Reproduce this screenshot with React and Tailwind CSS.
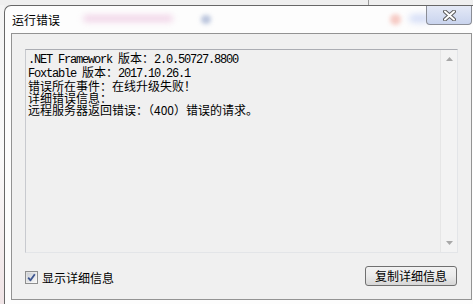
const SANS = "font-['Noto_Sans_CJK_SC','Noto_Sans',sans-serif]";

function CloseButton() {
  return (
    <div className="w-[46px] h-[19px] rounded-b-[4px] border border-t-0 border-[#8a8d96] bg-gradient-to-b from-[#e4e9f6] to-[#c9d4ee] flex items-center justify-center">
      <svg width="13" height="11" viewBox="0 0 13 11">
        <path d="M2 1.5 L11 9.5 M11 1.5 L2 9.5" stroke="#5a5a5a" strokeWidth="4" strokeLinecap="round" />
        <path d="M2 1.5 L11 9.5 M11 1.5 L2 9.5" stroke="#ffffff" strokeWidth="2" strokeLinecap="round" />
      </svg>
    </div>
  );
}

function Scrollbar() {
  return (
    <div className="w-[17px] h-full border-l border-[#e6e6e6] bg-[#f3f3f3] flex flex-col justify-between items-center py-[7px]">
      <svg width="7" height="4" viewBox="0 0 7 4"><path d="M0 4 L3.5 0 L7 4 Z" fill="#a8a8a8" /></svg>
      <svg width="7" height="4" viewBox="0 0 7 4"><path d="M0 0 L3.5 4 L7 0 Z" fill="#a8a8a8" /></svg>
    </div>
  );
}

function Checkbox() {
  return (
    <div className="w-[13px] h-[13px] border border-[#8e8f8f] bg-gradient-to-br from-[#dcdcdc] to-[#fbfbfb] p-[1px]">
      <div className="w-full h-full bg-gradient-to-br from-[#cbcfd5] to-[#f6f6f6] flex items-center justify-center">
        <svg width="9" height="9" viewBox="0 0 9 9">
          <path d="M1.2 4.6 L3.5 7.3 L7.8 1.2" stroke="#3d5590" strokeWidth="1.8" fill="none" strokeLinejoin="round" />
        </svg>
      </div>
    </div>
  );
}

export default function App() {
  const mono = "font-['Liberation_Mono','Noto_Sans_CJK_SC',monospace] tracking-[-1.2px]";
  const cjk = "tracking-normal font-['Noto_Sans_CJK_SC',sans-serif]";

  return (
    <div className={`relative w-[473px] h-[304px] overflow-hidden bg-[#efefef] pt-[5px] pl-[4px] ${SANS}`}>
      {/* background behind the window */}
      <div className="absolute left-[368px] top-0 w-px h-[5px] bg-[#9a9a9a]" />
      <div className="absolute left-0 top-[5px] w-[4px] h-[299px] bg-gradient-to-b from-[#f4f4f4] via-[#fafafa] to-[#f0e4e6]" />

      <div className="relative h-[300px] w-[480px] border-l border-t border-[#676767] rounded-tl-[7px] bg-[#fdfdfd] pl-[6px]">
        {/* aero glass blur showing through */}
        <div className="absolute left-[78px] top-[9px] w-[90px] h-[7px] rounded-full bg-[#e6aed4] blur-[3px] opacity-50" />
        <div className="absolute left-[196px] top-[9px] w-[10px] h-[9px] rounded-full bg-[#8fa0c8] blur-[2px] opacity-60" />
        <div className="absolute left-[385px] top-[8px] w-[11px] h-[11px] rounded-full bg-[#f2aaa0] blur-[2px] opacity-60" />
        <div className="absolute left-[404px] top-[8px] w-[22px] h-[9px] rounded-full bg-[#bfcdf4] blur-[3px] opacity-60" />

        <div className="relative -ml-[6px] w-[467px] h-[27px] flex items-start justify-between">
          <span className="pl-[7px] pt-[8px] text-[12px] leading-[12px] text-black">运行错误</span>
          <CloseButton />
        </div>

        <div className="relative w-[461px] h-[267px] border border-[#939393] bg-[#f0f0f0] pt-[15px] pl-[13px] pr-[13px] flex flex-col">
          <div className="w-[433px] h-[204px] border border-[#c8cacf] border-t-[#abadb3] border-b-[#e3e5e8] border-r-[#e3e5e8] bg-[#f0f0f0] flex">
            <div className="flex-1 pl-[2px] pt-[2px] text-[12px] leading-[12px] text-black whitespace-pre">
              <div className={mono}>.NET Framework <span className={cjk}>版本：</span>2.0.50727.8800</div>
              <div className={mono}>Foxtable <span className={cjk}>版本：</span>2017.10.26.1</div>
              <div>错误所在事件：在线升级失败！</div>
              <div>详细错误信息：</div>
              <div>远程服务器返回错误：（400）错误的请求。</div>
            </div>
            <Scrollbar />
          </div>

          <div className="mt-[13px] flex items-center justify-between pr-[1px]">
            <label className="flex items-center gap-[4px] text-[12px] leading-[12px] text-black pt-[3px]">
              <Checkbox />
              <span>显示详细信息</span>
            </label>
            <button className="w-[92px] h-[20px] rounded-[3px] border border-[#707070] bg-gradient-to-b from-[#f2f2f2] via-[#ebebeb] to-[#d6d6d6] text-[12px] leading-[12px] text-black">
              复制详细信息
            </button>
          </div>
        </div>
      </div>
    </div>
  );
}
